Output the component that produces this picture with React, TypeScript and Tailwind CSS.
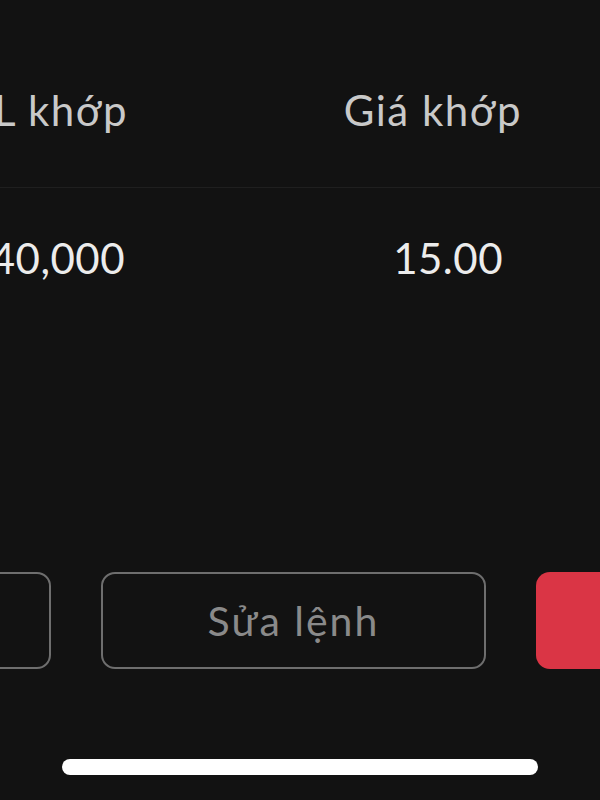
export default function App() {
  return (
    <div
      className="relative flex h-[800px] w-[600px] flex-col overflow-hidden bg-[#121212]"
      style={{ fontFamily: "Lato, 'Open Sans', sans-serif" }}
    >
      {/* header row */}
      <div className="flex h-[188px] shrink-0 items-start border-b border-[#1f1f1f] pt-[84px] text-[42px] leading-[52px] tracking-[1.5px] text-[#c9c9c9]">
        <div className="ml-[-172px] w-[300px] whitespace-nowrap text-right">KL khớp</div>
        <div className="ml-[94px] w-[300px] whitespace-nowrap text-right">Giá khớp</div>
      </div>

      {/* data row */}
      <div className="flex h-[140px] shrink-0 items-start pt-[44px] text-[42px] leading-[52px] tracking-[0.5px] text-[#ececec]">
        <div className="ml-[-175px] w-[300px] whitespace-nowrap text-right">40,000</div>
        <div className="ml-[78px] w-[300px] whitespace-nowrap text-right">15.00</div>
      </div>

      {/* actions */}
      <div className="mt-[244px] flex shrink-0 gap-[50px]">
        <button className="ml-[-334px] h-[97px] w-[385px] shrink-0 rounded-[14px] border-2 border-[#6e6e6e]" />
        <button className="h-[97px] w-[385px] shrink-0 rounded-[14px] border-2 border-[#6e6e6e] text-[41px] tracking-[2px] text-[#8a8a8a]">
          Sửa lệnh
        </button>
        <button className="h-[97px] w-[385px] shrink-0 rounded-[14px] bg-[#da3545]" />
      </div>

      {/* home indicator */}
      <div className="mt-auto mb-[25px] flex justify-center">
        <div className="h-[16px] w-[476px] rounded-full bg-white" />
      </div>
    </div>
  );
}
